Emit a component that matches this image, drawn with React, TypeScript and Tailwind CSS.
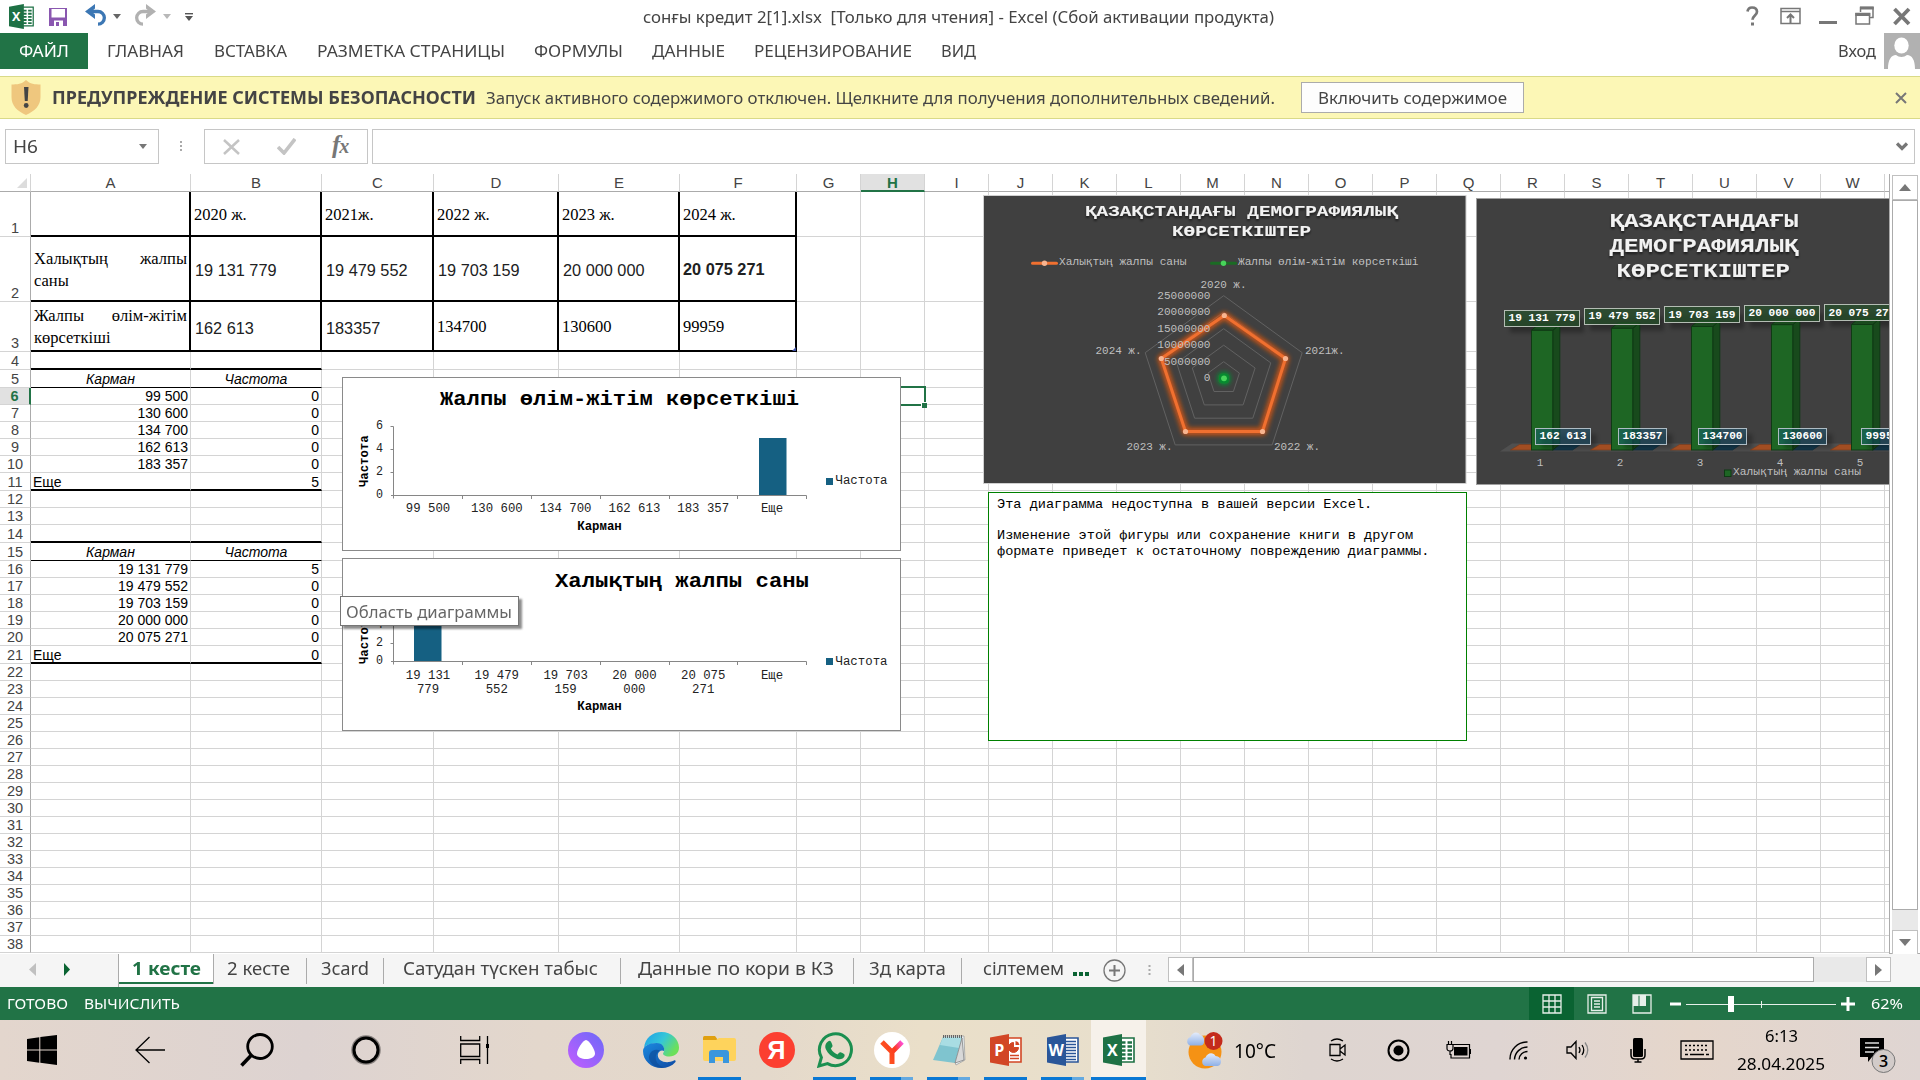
import { useLayoutEffect, useRef, useState, type ReactNode } from "react";

const UI = "font-['Noto_Sans','Open_Sans',sans-serif]";

/** Single-line label condensed or widened to an exact width. */
function Fit({ w, children, className = "" }: { w: number; children: ReactNode; className?: string }) {
  const ref = useRef<HTMLSpanElement>(null);
  const [scale, setScale] = useState(1);
  useLayoutEffect(() => {
    if (ref.current && ref.current.offsetWidth) setScale(w / ref.current.getBoundingClientRect().width);
  }, []);
  return (
    <span className={`inline-block shrink-0 whitespace-pre ${className}`} style={{ width: w }}>
      <span ref={ref} className="inline-block origin-left whitespace-pre" style={{ transform: `scaleX(${scale})` }}>
        {children}
      </span>
    </span>
  );
}

function OfficeIcon({ letter, color, light, kind, s }: { letter: string; color: string; light: string; kind: string; s: number }) {
  return (
    <svg width={s} height={s} viewBox="0 0 32 32">
      <path d="M15 4h16v24H15z" fill="#fff" stroke={light} strokeWidth="1.6" />
      {kind === "x" && (
        <path d="M18 8.5h4.5M24.5 8.5H29M18 12.5h4.5M24.5 12.5H29M18 16.500h4.500M24.500 16.500H29M18 20.500h4.500M24.500 20.500H29M18 24.500h4.500M24.500 24.500H29" stroke={light} strokeWidth="2.300" />
      )}
      {kind === "w" && <path d="M18 7.500h11M18 10.500h11M18 13.500h11M18 16.500h11M18 19.500h11M18 22.500h11M18 25.500h11" stroke={light} strokeWidth="1.500" />}
      {kind === "p" && (
        <g fill="none" stroke={light}>
          <path d="M23.500 8.500a5 5 0 1 0 5 5h-5z" fill={light} />
          <path d="M25.500 7a5 5 0 0 1 4 4h-4z" fill={light} stroke="none" />
          <path d="M20 21.500h9M20 24.500h9" strokeWidth="1.600" />
        </g>
      )}
      <path d="M0 3.500L19 0v32L0 28.500z" fill={color} />
      <text x="9.300" y="22" textAnchor="middle" fill="#fff" fontSize="16" fontWeight="700" className="font-['Open_Sans',sans-serif]">{letter}</text>
    </svg>
  );
}

function TitleBar() {
  return (
    <div className="flex h-[33px] items-center pl-[9px]">
      <div className="flex w-[206px] items-center">
        <OfficeIcon letter="X" color="#1e7145" light="#1e7145" kind="x" s={25} />
        <svg className="ml-[14px]" width="21" height="20" viewBox="0 0 21 20">
          <path d="M1 1h18v18H1z" fill="#8a57b0" />
          <path d="M3.500 2h13.500v8.500H3.500z" fill="#fff" />
          <path d="M6 13.500h9V19H6z" fill="#fff" />
          <path d="M8 15h3v4H8z" fill="#8a57b0" />
        </svg>
        <svg className="ml-[15px] -mt-[3px]" width="24" height="22" viewBox="0 0 24 22">
          <path d="M4 7.500h10a6.300 6.300 0 0 1 0 12.700" fill="none" stroke="#3c77b4" strokeWidth="3.300" />
          <path d="M11 0L1 7.500 11 15v-4.500L7.500 7.500 11 4.500z" fill="#3c77b4" />
        </svg>
        <svg className="ml-[5px]" width="8" height="5"><path d="M0 0h8L4 5z" fill="#666" /></svg>
        <svg className="ml-[12px] -mt-[3px]" width="24" height="22" viewBox="0 0 24 22">
          <path d="M20 7.500H10a6.300 6.300 0 0 0 0 12.700" fill="none" stroke="#b1b1b1" strokeWidth="3.300" />
          <path d="M13 0l10 7.500L13 15v-4.500l3.500-3L13 4.500z" fill="#b1b1b1" />
        </svg>
        <svg className="ml-[6px]" width="8" height="5"><path d="M0 0h8L4 5z" fill="#b8b8b8" /></svg>
        <svg className="ml-[14px] shrink-0" width="8" height="8"><path d="M0 .7h8" stroke="#555" strokeWidth="1.400" /><path d="M0 3h8L4 8z" fill="#555" /></svg>
      </div>
      <Fit w={631} className="ml-[428px] text-[17px] text-[#444]">сонғы кредит 2[1].xlsx  [Только для чтения] - Excel (Сбой активации продукта)</Fit>
      <svg className="ml-auto mr-[9px] -mt-[2px]" width="166" height="24" viewBox="0 0 166 24">
        <path d="M2.500 7.500C3 4.500 5 3.500 7 3.500c3 0 5 1.700 5 4.300 0 3.700-4.500 3.700-4.500 8" fill="none" stroke="#777" strokeWidth="2.700" />
        <path d="M6 18.500h3v3H6z" fill="#777" />
        <path d="M36 4.500h19v15H36zM36 7.500h19" fill="none" stroke="#777" strokeWidth="1.500" />
        <path d="M45.500 19V11M42 14l3.500-3.500L49 14" fill="none" stroke="#777" strokeWidth="2" />
        <path d="M74 18.500h18" stroke="#777" strokeWidth="3" />
        <path d="M115.500 8V3.500H128v10h-3.500" fill="none" stroke="#777" strokeWidth="1.500" />
        <path d="M111 9.500h13.500v10.500H111z" fill="#fff" stroke="#777" strokeWidth="1.500" />
        <path d="M110.300 10.500h15M115 4h13.700" stroke="#777" strokeWidth="3" />
        <path d="M149.500 5L164 20M164 5L149.500 20" stroke="#777" strokeWidth="3.800" />
      </svg>
    </div>
  );
}

function Ribbon() {
  return (
    <div className="flex h-[36px] items-center text-[17px] text-[#444]">
      <div className="flex h-full w-[88px] items-center justify-center bg-[#217346] text-white"><Fit w={50}>ФАЙЛ</Fit></div>
      <Fit w={77} className="ml-[19px]">ГЛАВНАЯ</Fit>
      <Fit w={73} className="ml-[30px]">ВСТАВКА</Fit>
      <Fit w={188} className="ml-[30px]">РАЗМЕТКА СТРАНИЦЫ</Fit>
      <Fit w={89} className="ml-[29px]">ФОРМУЛЫ</Fit>
      <Fit w={73} className="ml-[29px]">ДАННЫЕ</Fit>
      <Fit w={158} className="ml-[29px]">РЕЦЕНЗИРОВАНИЕ</Fit>
      <Fit w={35} className="ml-[29px]">ВИД</Fit>
      <Fit w={38} className="ml-auto">Вход</Fit>
      <svg className="ml-[8px] bg-[#b1b1b1]" width="36" height="36" viewBox="0 0 36 36">
        <ellipse cx="17.500" cy="12.500" rx="7.200" ry="8" fill="#fff" />
        <path d="M4 36c0-9 3-14 8-14 3 2.500 8 2.500 11 0 5 0 8 5 8 14z" fill="#fff" />
      </svg>
    </div>
  );
}

function SecurityBar() {
  return (
    <div className="mt-[7px] flex h-[43px] items-center border-y border-[#d9da88] bg-[#fcf7b6] text-[17px] text-[#444]">
      <svg className="ml-[11px]" width="30" height="35" viewBox="0 0 30 35">
        <path d="M15 0c4 4 9 4.500 14.500 4.500V17c0 9-6 14-14.500 18C6.500 31 .5 26 .5 17V4.500C6 4.500 11 4 15 0z" fill="#efc77e" />
        <path d="M13 7h4.500l-.8 14h-2.900z" fill="#444" /><circle cx="15.200" cy="25.500" r="2.400" fill="#444" />
      </svg>
      <Fit w={424} className="ml-[11px] font-bold">ПРЕДУПРЕЖДЕНИЕ СИСТЕМЫ БЕЗОПАСНОСТИ</Fit>
      <Fit w={789} className="ml-[10px]">Запуск активного содержимого отключен. Щелкните для получения дополнительных сведений.</Fit>
      <div className="ml-[26px] flex h-[31px] w-[223px] items-center justify-center border border-[#ababab] bg-[#fdfdfd]"><Fit w={189}>Включить содержимое</Fit></div>
      <svg className="ml-auto mr-[13px]" width="12" height="12"><path d="M1 1l10 10M11 1L1 11" stroke="#777" strokeWidth="2" /></svg>
    </div>
  );
}

function FormulaBar() {
  return (
    <div className="mt-[10px] flex h-[35px] items-stretch pl-[5px] text-[18px] text-[#444]">
      <div className="flex w-[154px] items-center border border-[#c6c6c6] pl-[7px]">
        <Fit w={25}>H6</Fit>
        <svg className="ml-auto mr-[11px]" width="8" height="5"><path d="M0 0h8L4 5z" fill="#777" /></svg>
      </div>
      <svg className="ml-[20px] self-center" width="4" height="12"><path d="M2 0v12" stroke="#aaa" strokeWidth="2" strokeDasharray="2 2" /></svg>
      <div className="ml-[21px] flex w-[164px] items-center border border-[#c6c6c6]">
        <svg className="ml-[18px]" width="18" height="16"><path d="M1 1l15 14M16 1L1 15" stroke="#c4c4c4" strokeWidth="2.500" /></svg>
        <svg className="ml-[36px]" width="19" height="17"><path d="M1 9l6 6L18 1" fill="none" stroke="#c4c4c4" strokeWidth="3.600" /></svg>
        <span className="ml-[36px] -mt-1 font-['Liberation_Serif',serif] text-[25px] font-bold italic leading-none tracking-[-1px] text-[#777]">f<span className="text-[20px]">x</span></span>
      </div>
      <div className="ml-[4px] flex w-[1543px] items-center justify-end border border-[#c6c6c6]">
        <svg className="mr-[6px]" width="12" height="9"><path d="M1 1.500l5 5 5-5" fill="none" stroke="#777" strokeWidth="3.300" /></svg>
      </div>
    </div>
  );
}

const COLS = [160, 131, 112, 125, 121, 117, 64, 64, 64, 64, 64, 64, 64, 64, 64, 64, 64, 64, 64, 64, 64, 64, 64];
const ROWS = [45, 65, 50, 18, 18, 17, 17, 17, 17, 17, 18, 17, 17, 18, 18, 17, 17, 17, 17, 17, 18, 17, 17, 17, 17, 17, 17, 17, 17, 17, 17, 17, 17, 17, 17, 17, 17, 17];

const serif = "flex items-center pl-[3px] pt-[2px] font-['Liberation_Serif',serif] text-[16.5px] leading-[22px] text-black";
const sans = "flex items-center pl-[4px] pt-[4px] font-['Liberation_Sans',sans-serif] text-[16.3px] text-[#202122]";
const num = "flex items-end justify-end pr-[2px] text-[14px] leading-[15px] text-black";
const numLast = "flex items-end justify-end pr-[2px] text-[14px] leading-[13px] text-black";
const left = "flex items-end pl-[2px] text-[14px] leading-[13px] text-black";
const head = "flex items-end justify-center italic text-[14px] leading-[16px] text-black";

const CELLS: Record<string, [ReactNode, string]> = {
  B1: ["2020 ж.", serif], C1: ["2021ж.", serif], D1: ["2022 ж.", serif], E1: ["2023 ж.", serif], F1: ["2024 ж.", serif],
  A2: [<div key="a2" className="mr-[2px] flex w-full flex-col"><div className="flex justify-between"><span>Халықтың</span><span>жалпы</span></div><span>саны</span></div>, serif],
  B2: ["19 131 779", sans], C2: ["19 479 552", sans], D2: ["19 703 159", sans], E2: ["20 000 000", sans],
  F2: ["20 075 271", "flex items-center pl-[3px] pt-[2px] text-[16.3px] font-bold text-[#202122]"],
  A3: [<div key="a3" className="mr-[2px] flex w-full flex-col"><div className="flex justify-between"><span>Жалпы</span><span>өлім-жітім</span></div><span>көрсеткіші</span></div>, serif],
  B3: ["162 613", sans], C3: ["183357", sans], D3: ["134700", serif], E3: ["130600", serif], F3: ["99959", serif],
  A5: ["Карман", head], B5: ["Частота", head],
  A6: ["99 500", num], A7: ["130 600", num], A8: ["134 700", num], A9: ["162 613", num], A10: ["183 357", num], A11: ["Еще", left],
  B6: ["0", num], B7: ["0", num], B8: ["0", num], B9: ["0", num], B10: ["0", num], B11: ["5", numLast],
  A15: ["Карман", head], B15: ["Частота", head],
  A16: ["19 131 779", num], A17: ["19 479 552", num], A18: ["19 703 159", num], A19: ["20 000 000", num], A20: ["20 075 271", num], A21: ["Еще", left],
  B16: ["5", num], B17: ["0", num], B18: ["0", num], B19: ["0", num], B20: ["0", num], B21: ["0", numLast],
};

function borderOf(r: number, c: number) {
  if (r <= 3 && c < 6) return "border-r-2 border-b-2 border-black";
  if (c < 2) {
    const last = "border-r border-r-[#d4d4d4] border-b-black ";
    if (r === 4 || r === 11 || r === 14 || r === 21) return last + "border-b-2";
    if (r === 5 || r === 15) return last + "border-b";
  }
  return "border-r border-b border-[#d4d4d4]";
}

function Sheet() {
  return (
    <div className="relative h-[780px] w-[1890px] shrink-0 overflow-hidden border-r border-[#ababab] bg-white font-['Liberation_Sans',sans-serif]">
      <div className="flex h-[18px] w-[1960px] text-[15px] leading-[17px] text-[#444]">
        <div className="flex w-[31px] shrink-0 items-end justify-end border-r border-b border-r-[#d4d4d4] border-b-[#ababab] pr-[3px] pb-[3px]">
          <svg width="10" height="10"><path d="M10 0v10H0z" fill="#dcdcdc" /></svg>
        </div>
        {COLS.map((w, i) => {
          const ch = String.fromCharCode(65 + i);
          return (
            <div key={ch} style={{ width: w }} className={`shrink-0 border-r border-r-[#d4d4d4] text-center ${ch === "H" ? "border-b-2 border-b-[#217346] bg-[#e1e1e1] font-bold text-[#217346]" : "border-b border-b-[#ababab]"}`}>
              {ch}
            </div>
          );
        })}
        <div className="w-[8px] border-b border-[#ababab]" />
      </div>
      {ROWS.map((h, ri) => (
        <div key={ri} className="flex w-[1960px]" style={{ height: h }}>
          <div className={`flex w-[31px] shrink-0 items-end justify-center border-b border-b-[#d4d4d4] text-[14.500px] leading-[16px] ${ri === 5 ? "border-r-2 border-r-[#217346] bg-[#e1e1e1] font-bold text-[#217346]" : "border-r border-r-[#ababab] text-[#444]"}`}>
            {ri + 1}
          </div>
          {COLS.map((w, ci) => {
            const cell = CELLS[String.fromCharCode(65 + ci) + (ri + 1)];
            return (
              <div key={ci} style={{ width: w }} className={`shrink-0 whitespace-nowrap ${borderOf(ri + 1, ci)} ${cell ? cell[1] : ""}`}>
                {cell ? cell[0] : null}
              </div>
            );
          })}
          <div className="w-[8px] border-b border-[#d4d4d4]" />
        </div>
      ))}
      <svg className="absolute left-[792px] top-[173px]" width="4" height="4"><path d="M4 0v4H0z" fill="#3f51a5" /></svg>
      <div className="absolute left-[859px] top-[212px] h-[20px] w-[67px] border-2 border-[#217346]" />
      <div className="absolute left-[921px] top-[228px] h-[6px] w-[6px] border-l border-t border-white bg-[#217346]" />
      <div className="absolute left-[342px] top-[203px]"><Histogram kind={1} /></div>
      <div className="absolute left-[342px] top-[384px]"><Histogram kind={2} /></div>
      <div className="absolute left-[340px] top-[422px] flex h-[30px] w-[179px] items-center border border-[#767676] bg-white pl-[5px] pt-px font-['Noto_Sans',sans-serif] text-[17px] text-[#666] shadow-[3px_3px_2px_rgba(0,0,0,0.45)]">
        <Fit w={166}>Область диаграммы</Fit>
      </div>
      <div className="absolute left-[983px] top-[21px]"><Radar /></div>
      <div className="absolute left-[1476px] top-[24px]"><Columns3D /></div>
      <div className="absolute left-[988px] top-[318px] h-[249px] w-[479px] border border-[#008000] bg-white pl-[8px] pt-[4px] font-['Liberation_Mono',monospace] text-[13.600px] leading-[16px] text-black">
        <p>Эта диаграмма недоступна в вашей версии Excel.</p>
        <p className="mt-[15px] whitespace-nowrap">Изменение этой фигуры или сохранение книги в другом<br />формате приведет к остаточному повреждению диаграммы.</p>
      </div>
    </div>
  );
}

function T({ x, y, w, s, b, f = "#222", mid, children }: { x: number; y: number; w: number; s: number; b?: boolean; f?: string; mid?: boolean; children: string }) {
  return (
    <text x={mid ? x - w / 2 : x} y={y} textLength={w} lengthAdjust="spacingAndGlyphs" fontSize={s} fontWeight={b ? 700 : 400} fill={f} className="whitespace-pre font-['Liberation_Mono',monospace]">
      {children}
    </text>
  );
}

function Histogram({ kind }: { kind: 1 | 2 }) {
  const one = kind === 1;
  const y0 = one ? 377 : 558;
  const base = one ? 495.5 : 661.5;
  const step = one ? 23 : 18;
  const cats = one
    ? [["99 500"], ["130 600"], ["134 700"], ["162 613"], ["183 357"], ["Еще"]]
    : [["19 131", "779"], ["19 479", "552"], ["19 703", "159"], ["20 000", "000"], ["20 075", "271"], ["Еще"]];
  return (
    <svg width="559" height={one ? 174 : 173} viewBox={`342 ${y0} 559 ${one ? 174 : 173}`} className="block">
      <rect x="342.500" y={y0 + 0.5} width="558" height={one ? 173 : 172} fill="#fff" stroke="#8a8a8a" />
      {one ? <T x={440} y={405} w={359} s={21} b f="#000">Жалпы өлім-жітім көрсеткіші</T> : <T x={555} y={587} w={254} s={21} b f="#000">Халықтың жалпы саны</T>}
      <rect x={one ? 759 : 414} y={one ? 438 : 616} width="27.500" height={one ? 57 : 45} fill="#156082" />
      <path d={`M393.500 ${base - 3 * step}V${base + 3}M391 ${base}H806.500`} fill="none" stroke="#868686" />
      {[1, 2, 3].map((k) => <path key={k} d={`M390.500 ${base - k * step}h3`} stroke="#868686" />)}
      {[462.5, 531.5, 600.5, 669.5, 737.5, 806.5].map((x) => <path key={x} d={`M${x} ${base}v3.500`} stroke="#868686" />)}
      {[0, 2, 4, 6].map((v, k) => <T key={v} x={379.5} y={base + 2.5 - k * step} w={7} s={12} mid>{String(v)}</T>)}
      {cats.map((lines, i) => lines.map((l, j) => <T key={l} x={428 + i * 68.8} y={(one ? 511.5 : 679) + j * 13.7} w={l.length * 7.4} s={12} mid>{l}</T>))}
      <T x={599.5} y={one ? 530 : 710} w={44.5} s={12} b f="#000" mid>Карман</T>
      <g transform={`translate(368 ${one ? 487 : 664}) rotate(-90)`}><T x={0} y={0} w={51.5} s={12} b f="#000">Частота</T></g>
      <rect x="826" y={one ? 478 : 658} width="7" height="7" fill="#156082" />
      <T x={835.5} y={one ? 484 : 664.500} w={52} s={12}>Частота</T>
    </svg>
  );
}

const ring = (r: number) =>
  [0, 1, 2, 3, 4].map((i) => {
    const a = (-90 + i * 72) * (Math.PI / 180);
    return `${(1223.7 + r * Math.cos(a)).toFixed(1)},${(378.2 + r * Math.sin(a)).toFixed(1)}`;
  }).join(" ");

const ORANGE = [[1224.3, 315.5], [1285.5, 358.5], [1262.5, 431.5], [1185.5, 431.5], [1161.3, 358.5]];

function Radar() {
  const g = "#bfbfbf";
  return (
    <svg width="484" height="289" viewBox="983 195 484 289" className="block">
      <defs>
        <filter id="glow" x="-30%" y="-30%" width="160%" height="160%"><feGaussianBlur stdDeviation="2.300" /></filter>
        <filter id="sh" x="-5%" y="-20%" width="110%" height="160%"><feDropShadow dx="0" dy="2" stdDeviation="1" floodOpacity=".6" /></filter>
      </defs>
      <rect x="983.500" y="195.500" width="482.500" height="288" fill="#404040" stroke="#d0d0d0" />
      <g filter="url(#sh)">
        <T x={1085} y={215.5} w={313} s={15.500} b f="#f2f2f2">ҚАЗАҚСТАНДАҒЫ ДЕМОГРАФИЯЛЫҚ</T>
        <T x={1172} y={235.500} w={139} s={15.500} b f="#f2f2f2">КӨРСЕТКІШТЕР</T>
      </g>
      <path d="M1032.500 263.300h24" stroke="#f07030" strokeWidth="3" strokeLinecap="round" /><circle cx="1044.500" cy="263.300" r="2.700" fill="#f8b48f" />
      <T x={1059} y={265} w={127.500} s={11} f={g}>Халықтың жалпы саны</T>
      <path d="M1211.500 263.300h24" stroke="#1b6b24" strokeWidth="3" strokeLinecap="round" /><circle cx="1223.500" cy="263.300" r="2.700" fill="#47d45a" />
      <T x={1238} y={265} w={180.500} s={11} f={g}>Жалпы өлім-жітім көрсеткіші</T>
      {[1, 2, 3, 4, 5].map((k) => <polygon key={k} points={ring(k * 16.5)} fill="none" stroke="#626262" />)}
      <polygon points={ORANGE.join(" ")} fill="none" stroke="#e8590c" strokeWidth="8" strokeLinejoin="round" opacity=".75" filter="url(#glow)" />
      <polygon points={ORANGE.join(" ")} fill="none" stroke="#f07030" strokeWidth="3" strokeLinejoin="round" />
      {ORANGE.map(([x, y]) => <circle key={x} cx={x} cy={y} r="2.600" fill="#f8b48f" />)}
      <rect x="1217.500" y="372" width="13" height="13" rx="5" fill="#078a30" filter="url(#glow)" />
      <rect x="1219" y="373.500" width="10" height="10" rx="4" fill="#078a30" />
      <circle cx="1224" cy="378.300" r="2.900" fill="#47d45a" />
      {["25000000", "20000000", "15000000", "10000000", "5000000", "0"].map((t, i) => (
        <T key={t} x={1210.5 - t.length * 6.65} y={299 + i * 16.4} w={t.length * 6.65} s={11} f={g}>{t}</T>
      ))}
      <T x={1200.5} y={288} w={46} s={11} f={g}>2020 ж.</T>
      <T x={1305} y={354} w={39.500} s={11} f={g}>2021ж.</T>
      <T x={1274} y={450} w={46} s={11} f={g}>2022 ж.</T>
      <T x={1126.5} y={450} w={46} s={11} f={g}>2023 ж.</T>
      <T x={1095.5} y={354} w={46} s={11} f={g}>2024 ж.</T>
    </svg>
  );
}

const BARS = [
  { top: 330.3, label: 310.5, ty: 320.5, a: "19 131 779", b: "162 613", bx: 1535.5, bw: 55 },
  { top: 328.3, label: 308.5, ty: 318.7, a: "19 479 552", b: "183357", bx: 1618.5, bw: 48 },
  { top: 326.5, label: 306.5, ty: 317.7, a: "19 703 159", b: "134700", bx: 1698.5, bw: 48 },
  { top: 324.7, label: 305.5, ty: 316, a: "20 000 000", b: "130600", bx: 1778.5, bw: 48 },
  { top: 324.5, label: 304.5, ty: 316, a: "20 075 271", b: "99959", bx: 1861.500, bw: 42 },
];

function Columns3D() {
  return (
    <svg width="460" height="287" viewBox="1476 198 460 287" className="block">
      <rect x="1476.500" y="198.500" width="470" height="286" fill="#404040" stroke="#a0a0a0" />
      <g filter="url(#sh)">
        <T x={1609.5} y={227} w={189} s={19.500} b f="#f2f2f2">ҚАЗАҚСТАНДАҒЫ</T>
        <T x={1609.5} y={252} w={189} s={19.500} b f="#f2f2f2">ДЕМОГРАФИЯЛЫҚ</T>
        <T x={1616.5} y={277} w={173.500} s={19.500} b f="#f2f2f2">КӨРСЕТКІШТЕР</T>
      </g>
      <path d="M1500 451.500l12-8h420v8z" fill="#505050" />
      {BARS.map((b, i) => {
        const x = 1531.5 + i * 80;
        return (
          <g key={i}>
            <path d={`M${x - 21} 450l9-5.500H${x}v5.500z`} fill="#a24d22" stroke="#7a3c1c" strokeWidth=".7" />
            <path d={`M${x + 21} 450l8-5.500h20l-8 5.500z`} fill="#153c50" stroke="#0e2f42" strokeWidth=".7" />
            <rect x={1510 + i * 80} y={b.label + 8} width="74" height="14" fill="#000" opacity=".3" filter="url(#glow)" />
            <path d={`M${x + 21.300} ${b.top}l7-6V444l-7 6z`} fill="#184a1c" stroke="#0f3a14" />
            <path d={`M${x} ${b.top}l7-6h21.300l-7 6z`} fill="#1a4a1e" stroke="#0f3a14" />
            <rect x={x} y={b.top} width="21.300" height={450 - b.top} fill="#1e6624" stroke="#0f3a14" />
            <rect x={1504.5 + i * 80} y={b.label} width="75" height="16" fill="#25502a" fillOpacity=".7" stroke="#b4bdb4" />
            <T x={1508.5 + i * 80} y={b.ty} w={67} s={11} b f="#fff">{b.a}</T>
            <rect x={b.bx + 6} y="434" width={b.bw} height="15" fill="#000" opacity=".25" filter="url(#glow)" />
            <rect x={b.bx} y="428.500" width={b.bw} height="16" fill="#156082" fillOpacity=".42" stroke="#aebcc4" />
            <T x={b.bx + 4} y={439} w={b.bw - 8} s={11} b f="#fff">{b.b}</T>
            <T x={1540 + i * 80} y={466} w={6.6} s={11} f="#bfbfbf" mid>{String(i + 1)}</T>
          </g>
        );
      })}
      <rect x="1724.500" y="470" width="6.500" height="6.500" fill="#1e6624" stroke="#0f3a14" />
      <T x={1733} y={475} w={128} s={11} f="#bfbfbf">Халықтың жалпы саны</T>
    </svg>
  );
}

function VScroll() {
  return (
    <div className="ml-[2px] mt-[1px] flex h-[780px] w-[26px] flex-col">
      <div className="flex h-[25px] items-center justify-center border border-[#c0c0c0]"><svg width="12" height="7"><path d="M6 0l6 7H0z" fill="#777" /></svg></div>
      <div className="h-[710px] border border-[#ababab] bg-white" />
      <div className="flex-1 bg-[#e9e9e9]" />
      <div className="flex h-[25px] items-center justify-center border border-[#c0c0c0] bg-white"><svg width="12" height="7"><path d="M6 7l6-7H0z" fill="#777" /></svg></div>
    </div>
  );
}

function SheetTabs() {
  const sep = <div className="h-[26px] w-px self-center bg-[#ababab]" />;
  return (
    <div className="flex h-[33px] items-stretch bg-[#f5f5f5] text-[18px] leading-[30px] text-[#444]">
      <div className="flex w-[119px] items-start border-r border-[#ababab] pt-[9px]">
        <svg className="ml-[29px]" width="7" height="13"><path d="M7 0v13L0 6.500z" fill="#c0c0c0" /></svg>
        <svg className="ml-[28px]" width="7" height="13"><path d="M0 0v13l6-6.500z" fill="#0a6332" /></svg>
      </div>
      <div className="flex h-[30px] w-[94px] justify-center border-b-2 border-[#217346] bg-white font-bold text-[#217346]"><Fit w={69} className="-mt-px">1 кесте</Fit></div>
      <div className="h-[30px] w-px bg-[#ababab]" />
      <Fit w={63} className="ml-[13px] mr-[16px] -mt-px">2 кесте</Fit>{sep}
      <Fit w={48} className="ml-[14px] mr-[14px] -mt-px">3card</Fit>{sep}
      <Fit w={195} className="ml-[19px] mr-[22px] -mt-px">Сатудан түскен табыс</Fit>{sep}
      <Fit w={196} className="ml-[17px] mr-[19px] -mt-px">Данные по кори в КЗ</Fit>{sep}
      <Fit w={77} className="ml-[15px] mr-[15px] -mt-px">3д карта</Fit>{sep}
      <Fit w={81} className="ml-[21px] -mt-px">сілтемем</Fit>
      <svg className="ml-[9px] mt-[18px]" width="16" height="4"><path d="M0 0h4v4H0zM6 0h4v4H6zM12 0h4v4h-4z" fill="#0a6332" /></svg>
      <svg className="ml-[14px] mt-[5px]" width="23" height="23"><circle cx="11.500" cy="11.500" r="10.500" fill="none" stroke="#777" strokeWidth="1.300" /><path d="M11.500 6v11M6 11.500h11" stroke="#777" strokeWidth="2" /></svg>
      <svg className="ml-[22px] mt-[11px]" width="3" height="12"><path d="M1.500 0v12" stroke="#aaa" strokeWidth="2" strokeDasharray="2 2" /></svg>
      <div className="ml-auto mr-[29px] mt-[3px] flex h-[25px] w-[723px] bg-[#e9e9e9]">
        <div className="flex w-[25px] items-center justify-center border border-[#c0c0c0] bg-white"><svg width="7" height="12"><path d="M7 0v12L0 6z" fill="#777" /></svg></div>
        <div className="w-[621px] border border-[#ababab] bg-white" />
        <div className="ml-auto flex w-[25px] items-center justify-center border border-[#c0c0c0] bg-white"><svg width="7" height="12"><path d="M0 0v12l7-6z" fill="#777" /></svg></div>
      </div>
    </div>
  );
}

function StatusBar() {
  return (
    <div className="flex h-[33px] items-center bg-[#217346] text-[15px] text-white">
      <Fit w={61} className="ml-[7px]">ГОТОВО</Fit>
      <Fit w={96} className="ml-[16px]">ВЫЧИСЛИТЬ</Fit>
      <div className="ml-auto flex h-full w-[45px] items-center justify-center bg-[#0a6332]">
        <svg width="20" height="20"><path d="M1 1h18v18H1zM7 1v18M13 1v18M1 7h18M1 13h18" fill="none" stroke="#e6efe9" strokeWidth="1.300" /></svg>
      </div>
      <div className="flex w-[45px] justify-center">
        <svg width="20" height="20"><path d="M1 1h18v18H1zM4.500 3.500h11v13h-11zM7 7h6M7 10h6M7 13h6" fill="none" stroke="#e6efe9" strokeWidth="1.300" /></svg>
      </div>
      <div className="flex w-[45px] justify-center">
        <svg width="20" height="20"><path d="M1 1h18v18H1z" fill="none" stroke="#e6efe9" strokeWidth="1.300" /><path d="M1 1h5.500v11H1zM7.500 1H14v11H7.500z" fill="#e6efe9" /></svg>
      </div>
      <svg className="ml-[2px]" width="192" height="24" viewBox="1666 991 192 24">
        <path d="M1670 1003h11" stroke="#fff" strokeWidth="3" /><path d="M1686 1003.500h150M1761.500 1000v7" stroke="#e6efe9" />
        <path d="M1728 995h6v16h-6z" fill="#fff" /><path d="M1841 1003h14M1848 996v14" stroke="#fff" strokeWidth="3" />
      </svg>
      <Fit w={32} className="ml-[13px] mr-[17px]">62%</Fit>
    </div>
  );
}

function Cell({ w, children, bar, split, active }: { w: number; children: ReactNode; bar?: boolean; split?: boolean; active?: boolean }) {
  return (
    <div style={{ width: w }} className={`flex h-full shrink-0 flex-col items-center ${active ? "bg-[#f6f1ea]" : ""}`}>
      <div className="flex flex-1 items-center pt-[3px]">{children}</div>
      {bar ? (
        <div className={`flex h-[3px] bg-[#0a78d4] ${active ? "w-full" : "w-[43px]"}`}>{split && <div className="ml-auto w-[12px] bg-[#64a9e0]" />}</div>
      ) : (
        <div className="h-[3px]" />
      )}
    </div>
  );
}

function Taskbar() {
  return (
    <div className="flex h-[60px] items-stretch bg-[linear-gradient(90deg,#e3d6cd_0%,#ddd3d1_16%,#e3d7cc_28%,#e4d9cb_40%,#eadfc9_48%,#e8dfcc_58%,#ded5d0_68%,#dfd5d2_78%,#e5d6cb_88%,#dfd5d2_100%)]">
      <Cell w={84}><svg width="30" height="30"><path d="M0 4l12.300-1.700v12.200H0zM13.300 2.100L30 0v14.500H13.300zM0 15.500h12.300v12.200L0 26zM13.300 15.500H30V30l-16.700-2.200z" fill="#000" /></svg></Cell>
      <Cell w={131}><svg width="30" height="28"><path d="M30 14H1M14.500 1L1 14l13.500 13" fill="none" stroke="#000" strokeWidth="1.300" /></svg></Cell>
      <Cell w={84}><svg width="34" height="34"><ellipse cx="20" cy="13.500" rx="12.300" ry="12" fill="none" stroke="#000" strokeWidth="2.800" /><path d="M11.500 22L1.500 32.500" stroke="#000" strokeWidth="3.600" /></svg></Cell>
      <Cell w={134}><svg width="32" height="32"><circle cx="16" cy="16" r="13.500" fill="none" stroke="#000" strokeOpacity=".4" strokeWidth="2.500" /><circle cx="16" cy="16" r="12" fill="none" stroke="#000" strokeWidth="3" /></svg></Cell>
      <Cell w={83}><svg width="29" height="28"><path d="M.7 0v4.500h19V0M.7 8h19v12.500h-19zM.7 28v-4.500h19V28M27.500 0v28" fill="none" stroke="#000" strokeWidth="1.300" /><path d="M26 8h3v4h-3z" /></svg></Cell>
      <Cell w={140}>
        <svg width="36" height="36"><defs><linearGradient id="al" x1="0" y1="1" x2="1" y2="0"><stop offset="0" stopColor="#c45cff" /><stop offset="1" stopColor="#6a6af8" /></linearGradient></defs>
          <circle cx="18" cy="18" r="18" fill="url(#al)" /><path d="M18 8c3 0 9 9.500 9 13.500S22 27 18 27s-9-1.500-9-5.500S15 8 18 8z" fill="#fff" /></svg>
      </Cell>
      <div className="-ml-[14px] flex">
        <Cell w={38}>
          <svg width="36" height="36" viewBox="0 0 36 36">
            <defs>
              <linearGradient id="e1" x1="0" y1="0" x2="1" y2=".5"><stop offset="0" stopColor="#1d9ee8" /><stop offset=".55" stopColor="#34c6d8" /><stop offset="1" stopColor="#6ce05a" /></linearGradient>
              <linearGradient id="e2" x1="0" y1="0" x2=".8" y2="1"><stop offset="0" stopColor="#1b8ae0" /><stop offset="1" stopColor="#0f4fa8" /></linearGradient>
            </defs>
            <path d="M1 16C2 6 9.500 0 18.500 0 28.500 0 36 7.500 36 15.500c0 5.500-4 9-9.500 9-5 0-7-2-6.300-3.500 2-2.500 1.500-9-6.700-9.500C7 11.500 2.500 13 1 16z" fill="url(#e1)" />
            <path d="M13.500 11c6 0 8.500 4.500 7.500 8-2-1.500-6 0-6.200 4 0 6 8.200 9.500 16.200 5.500 1-.5 2 .3 1.500 1.500C29 34 24 36 18.500 36 8 36 0 28.500 0 19c0-5 6-8 13.500-8z" fill="url(#e2)" />
            <path d="M17 18.500c-8 5-4 16 5 17-11 2-19-7-15-14 2-3.500 6-4.500 10-3z" fill="#0c4a94" opacity=".6" />
          </svg>
        </Cell>
      </div>
      <div className="ml-[10px] flex">
        <Cell w={58} bar>
          <svg width="33" height="28"><path d="M0 4V1.500Q0 0 1.500 0H12l3 4z" fill="#e0a010" /><path d="M0 4h13l3-2h15q2 0 2 2v19q0 2-2 2H2q-2 0-2-2z" fill="#fed35c" /><path d="M6 27V17q0-3 3-3h14q3 0 3 3v10h-6v-6h-8v6z" fill="#3a96dd" /></svg>
        </Cell>
        <Cell w={58}><svg width="36" height="36"><circle cx="18" cy="18" r="18" fill="#fc3f30" /><text x="17.500" y="26.500" textAnchor="middle" fontSize="25" fontWeight="700" fill="#fff" className="font-['Liberation_Sans',sans-serif]">Я</text></svg></Cell>
        <Cell w={57} bar>
          <svg width="36" height="36" viewBox="0 0 36 36"><path d="M2 34l2.400-8.600A16 16 0 1 1 10.500 31.600z" fill="none" stroke="#1b8f50" strokeWidth="3" /><path d="M11 9.500c2-1.500 3-.5 4.500 4 .3 1-.8 1.800-1.700 3 1.800 3.200 4 5 6.700 6 1-1 2-2.500 3-2.200 4 1.700 4.500 2 4 4-1 3-5 3.500-8 2.400-5-1.800-8.500-5-10.500-9.200-1.500-3-.5-6.500 2-8z" fill="#1b8f50" /></svg>
        </Cell>
        <Cell w={57} bar split>
          <svg width="36" height="36"><defs><linearGradient id="yb" gradientUnits="userSpaceOnUse" x1="7" y1="20" x2="28" y2="10"><stop offset="0" stopColor="#ff5a1f" /><stop offset=".6" stopColor="#fb3b20" /><stop offset="1" stopColor="#ff4fd8" /></linearGradient></defs><circle cx="18" cy="18" r="18" fill="#fff" /><path d="M8 10l10 10v12M28 10L18 20" fill="none" stroke="url(#yb)" strokeWidth="5" /></svg>
        </Cell>
        <Cell w={57} bar split>
          <svg width="34" height="34"><path d="M12 3h20l1 24-9 5z" fill="#e8eef0" stroke="#999" strokeWidth=".7" /><path d="M11 4h19l-7 26-22-3z" fill="#7fc4cf" /><path d="M11 4h19l-3 11L8 12z" fill="#a9dde3" /><path d="M23 30l7-25 2 22z" fill="#d8d8d8" stroke="#777" strokeWidth=".7" /><path d="M11 3.500h19" stroke="#666" strokeWidth="3" strokeDasharray="1 1" /></svg>
        </Cell>
        <Cell w={57} bar><OfficeIcon letter="P" color="#d24625" light="#d24625" kind="p" s={32} /></Cell>
        <Cell w={57} bar split><OfficeIcon letter="W" color="#2a5699" light="#2a5699" kind="w" s={32} /></Cell>
      </div>
      <div className="flex"><Cell w={55} bar active><OfficeIcon letter="X" color="#1e7145" light="#1e7145" kind="x" s={32} /></Cell></div>
      <svg className="ml-[39px] mt-[10px]" width="40" height="40" viewBox="0 0 40 40">
        <defs><linearGradient id="cl" x1="0" y1="0" x2="0" y2="1"><stop offset="0" stopColor="#e4ecfb" /><stop offset="1" stopColor="#8fb0e6" /></linearGradient></defs>
        <circle cx="20" cy="22" r="16.500" fill="#f59214" />
        <path d="M5 15.500a4.500 4.500 0 0 1 .5-8.500C7 2 13 1 15 5c5 0 6 10 1 10.500z" fill="url(#cl)" />
        <path d="M20 36a4.500 4.500 0 0 1 .500-8.500c1.500-5 8-6 10-1.500 7 0 7 10 2 10z" fill="url(#cl)" />
        <circle cx="28.500" cy="11" r="9" fill="#c42b1c" /><text x="28.500" y="16" textAnchor="middle" fontSize="14" fill="#fff" className="font-['Open_Sans',sans-serif]">1</text>
      </svg>
      <Fit w={42} className="ml-[9px] self-center pt-[2px] text-[19px] text-black">10°C</Fit>
      <div className="ml-[32px] flex">
        <Cell w={60}>
          <svg width="18" height="24"><path d="M2 3q6-4 12 0M2 21q6 4 12 0M1 6.500h10v11H1zM11 11l5-4v10l-5-4" fill="none" stroke="#000" strokeWidth="1.300" /></svg>
        </Cell>
        <Cell w={60}><svg width="23" height="23"><circle cx="11.500" cy="11.500" r="10" fill="none" stroke="#000" strokeWidth="2" /><circle cx="11.500" cy="11.500" r="5" /></svg></Cell>
        <Cell w={60}><svg width="25" height="18" viewBox="0 0 25 18"><path d="M8 6h13.500v8.500H8z" fill="#000" /><path d="M7 3.500h16.500V17H5v-4M24.500 8v5M1 3.500h6v4Q7 10 4 10T1 7.500zM2.500 0v3.500M5.500 0v3.500M4 10v4" fill="none" stroke="#000" strokeWidth="1.200" /></svg></Cell>
        <Cell w={60}><svg width="19" height="19"><path d="M1 18.500A17 17 0 0 1 18.500 1M5.500 18.500A13 13 0 0 1 18.500 6M10 18.500A8.500 8.500 0 0 1 18.500 10.500" fill="none" stroke="#000" strokeWidth="1.400" /><circle cx="16.500" cy="17" r="1.600" /></svg></Cell>
        <Cell w={60}><svg width="24" height="20"><path d="M1 7h4l5-5.500v17L5 13H1z" fill="none" stroke="#000" strokeWidth="1.300" /><path d="M13 7q2 3 0 6M16 5q3.500 5 0 10" fill="none" stroke="#000" strokeWidth="1.300" /><path d="M19 2.500q5.500 7.500 0 15" fill="none" stroke="#888" strokeWidth="1.300" /></svg></Cell>
        <Cell w={60}><svg width="16" height="25"><rect x="3" y="0" width="10" height="19" rx="1.500" /><path d="M1 11v6q0 4 4 4h6q4 0 4-4v-6M8 21v3M4.500 24h7" fill="none" stroke="#000" strokeWidth="1.500" /></svg></Cell>
        <Cell w={58}><svg width="34" height="20"><path d="M1 1h32v18H1z" fill="none" stroke="#000" strokeWidth="1.300" /><path d="M5 5.500h24M5 10h24" stroke="#000" strokeWidth="1.600" strokeDasharray="2 2" /><path d="M5 14.500h3M10 14.500h14M26 14.500h3" stroke="#000" strokeWidth="1.500" /></svg></Cell>
      </div>
      <div className="ml-[10px] flex w-[90px] flex-col items-center pt-[2px] text-[17px] leading-[28px] text-black">
        <Fit w={33}>6:13</Fit>
        <Fit w={88}>28.04.2025</Fit>
      </div>
      <svg className="ml-auto mr-[23px] mt-[15px]" width="38" height="38" viewBox="0 0 38 38">
        <path d="M1 3h24v19H13l-4 5v-5H1z" /><path d="M6 8h14M6 12.500h14M6 17h9" stroke="#ddd" strokeWidth="1.300" />
        <circle cx="24.500" cy="26" r="11.500" fill="#d2cbc9" stroke="#777" /><text x="24.500" y="31.500" textAnchor="middle" fontSize="16" fontWeight="600" className="font-['Open_Sans',sans-serif]">3</text>
      </svg>
    </div>
  );
}

export default function App() {
  return (
    <div className={`flex h-[1080px] w-[1920px] flex-col overflow-hidden bg-white ${UI}`}>
      <TitleBar />
      <Ribbon />
      <SecurityBar />
      <FormulaBar />
      <div className="mt-[10px] flex h-[780px] border-b border-[#ababab]">
        <Sheet />
        <VScroll />
      </div>
      <SheetTabs />
      <StatusBar />
      <Taskbar />
    </div>
  );
}
